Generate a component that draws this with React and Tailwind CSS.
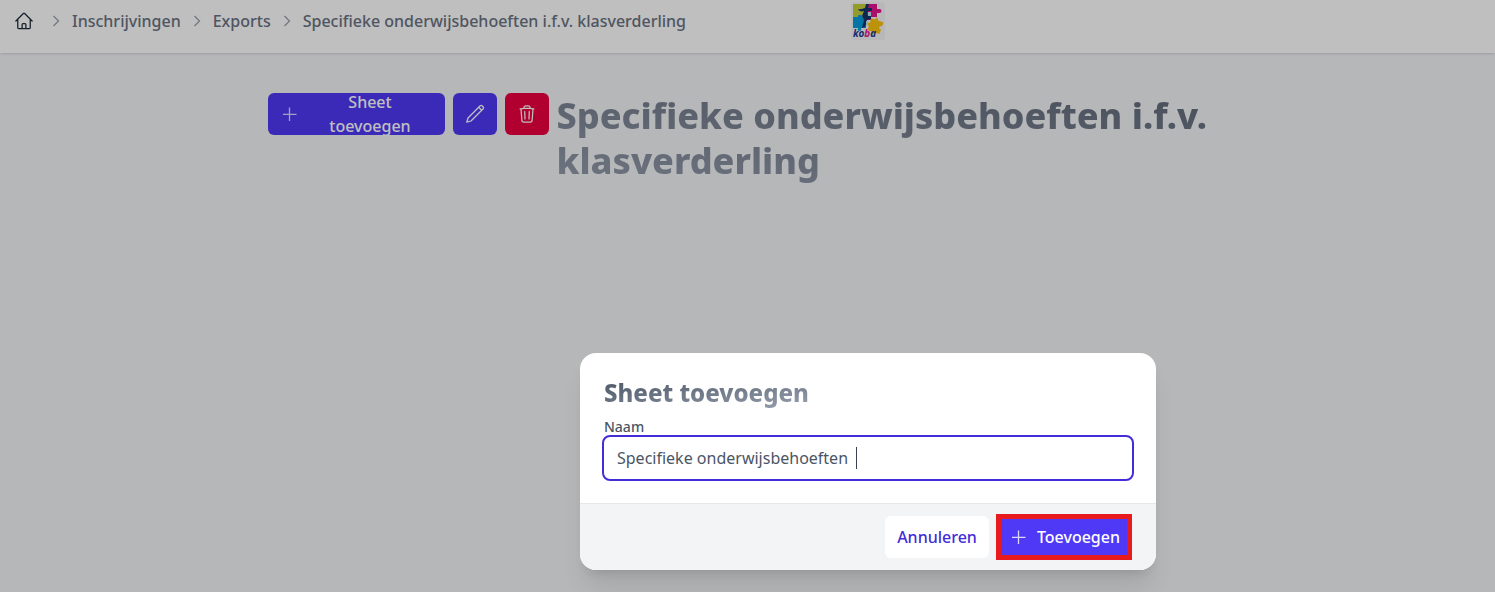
import { HiOutlineHome, HiOutlineTrash } from "react-icons/hi2";

function Chevron() {
  return (
    <svg className="h-3 w-2 shrink-0" viewBox="0 0 8 12" fill="none" stroke="#99a1af" strokeWidth="1.3">
      <path d="M1.5 1 6.5 6l-5 5" />
    </svg>
  );
}

function Plus() {
  return (
    <svg className="size-4 shrink-0" viewBox="0 0 16 16" fill="none" stroke="currentColor" strokeOpacity="0.8" strokeWidth="1.3">
      <path d="M8.5 1.5V15M2 8.300h13.5" />
    </svg>
  );
}

function Pencil() {
  return (
    <svg className="size-5" viewBox="0 0 20 20" fill="none" stroke="currentColor" strokeWidth="1.3" strokeLinejoin="round">
      <path d="M1.8 18.2 3 14 15.2 1.8a1.3 1.3 0 0 1 1.8 0l1.2 1.2a1.3 1.3 0 0 1 0 1.8L6 17l-4.2 1.2zM13.7 3.3l3 3" />
    </svg>
  );
}

function Logo() {
  return (
    <svg className="h-[40px] w-[36px]" viewBox="0 0 36 40">
      <rect x="1" y="1" width="34" height="38" rx="3" fill="#f6f6fa" />
      <path d="M3 3h13v13h-4v2H8v-2H3z" fill="#c5cf3a" />
      <path d="M16 3h11v5h2.500a2 2 0 1 1 0 4H27v4h-6v3h-4v-3h-1z" fill="#e3168c" />
      <path d="M3 16h5c-1-3 5-3 4 0h4v11h-5c2 4-5 4-3 0H3z" fill="#069cdd" />
      <path d="M21 17l4 1.500c1-3 4-2 3 1l5.500 2-1.500 4c-3-1-4 2-1 3l-1.500 4.500-5-1.500c-1 3-4 2-3-1l-4-1.500 1.500-4c-3-1-2-4 1-3z" fill="#fbc50b" />
      <path d="M8 8c4 1 5-1 7-1l1-4h3l-1 4h4v3h-4l-1 4 4 1v3l-4 1-2 7-3 1 2-8-2-4 2-5c-3 1-5 0-6-2z" fill="#13346d" />
      <path d="M18 11h3v4h-3zM16 20h2v4h-2z" fill="#bfe3f5" />
      <text x="3" y="35.500" fontSize="10.500" fontWeight="700" fontStyle="italic" fontFamily="Noto Sans" textLength="23" lengthAdjust="spacingAndGlyphs" fill="#1e3a94">
        ko<tspan fill="#e3168c">b</tspan>a
      </text>
    </svg>
  );
}

export default function App() {
  return (
    <div className="relative h-[592px] w-full overflow-hidden bg-gray-100 font-['Noto_Sans',sans-serif] text-base">
      <header className="flex h-[53px] bg-white shadow-sm">
        <nav className="flex h-[42px] w-[850px] items-center pl-[14px] font-medium text-gray-500">
          <HiOutlineHome className="size-5 text-gray-800" />
          <span className="ml-[18px] mr-3"><Chevron /></span>
          <span>Inschrijvingen</span>
          <span className="mx-3"><Chevron /></span>
          <span>Exports</span>
          <span className="mx-3"><Chevron /></span>
          <span>Specifieke onderwijsbehoeften i.f.v. klasverderling</span>
        </nav>
        <div className="pt-px"><Logo /></div>
      </header>
      <main className="mx-auto flex w-[960px] items-start gap-2 pt-10">
        <button className="flex h-[42px] w-[177px] shrink-0 items-center rounded-md bg-[#4f39f6] px-[13px] font-medium text-white">
          <Plus />
          <span className="flex-1 pl-6 pr-3 text-center leading-6">Sheet toevoegen</span>
        </button>
        <button className="flex h-[42px] w-11 shrink-0 items-center justify-center rounded-md bg-[#4f39f6] text-white">
          <Pencil />
        </button>
        <button className="flex h-[42px] w-11 shrink-0 items-center justify-center rounded-md bg-[#ec003f] text-white">
          <HiOutlineTrash className="size-5" strokeWidth={1.5} />
        </button>
        <h1 className="bg-linear-to-bl from-[#5f6979] to-[#949cab] bg-clip-text text-4xl leading-[45px] font-extrabold text-transparent">
          Specifieke onderwijsbehoeften i.f.v. klasverderling
        </h1>
      </main>
      <div className="absolute inset-0 bg-black/25" />
      <section className="absolute left-[580px] top-[353px] flex h-[217px] w-[576px] flex-col overflow-hidden rounded-2xl bg-white shadow-xl">
        <div className="h-[150px] px-6 pt-6">
          <h2 className="w-fit bg-linear-to-br from-gray-600 to-gray-400 bg-clip-text text-2xl font-extrabold text-transparent">Sheet toevoegen</h2>
          <label className="mt-2 block h-[18px] text-sm leading-5 font-medium text-gray-600">Naam</label>
          <div className="-mx-0.5 flex h-[46px] items-center rounded-lg border-2 border-[#432dd7] px-[13px] text-gray-600">
            <span>Specifieke onderwijsbehoeften</span>
            <span className="ml-2 h-[22px] w-px bg-gray-700" />
          </div>
        </div>
        <footer className="flex flex-1 items-center justify-end gap-[7px] border-t border-gray-200 bg-gray-100 pr-6">
          <button className="h-[42px] w-[104px] rounded-md bg-white font-medium text-[#432dd7]">Annuleren</button>
          <button className="-mt-px flex h-[46px] w-[136px] items-center justify-between border-[5px] border-[#e71b1e] bg-[#4f39f6] pl-[9px] pr-[7px] pt-px font-medium text-white">
            <Plus />
            Toevoegen
          </button>
        </footer>
      </section>
    </div>
  );
}
